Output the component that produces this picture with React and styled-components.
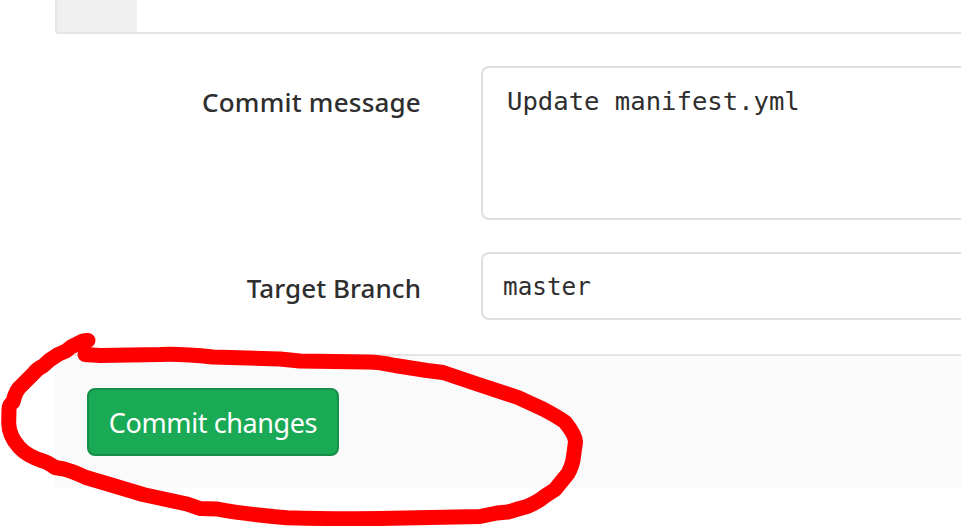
import React from "react";
import styled, { createGlobalStyle } from "styled-components";

const GlobalStyle = createGlobalStyle`
  html, body { margin: 0; background: #fff; overflow: hidden; }
  *, *::before, *::after { box-sizing: border-box; }
`;

const Page = styled.main`
  position: relative;
  height: 526px;
  padding-left: 55px;
  overflow: hidden;
  color: #2e2e2e;
  font-family: "Segoe UI", "Noto Sans", sans-serif;
`;

const Editor = styled.section`
  height: 34px;
  border: solid #e5e5e5;
  border-width: 0 0 2px 2px;
  border-bottom-left-radius: 4px;
  overflow: hidden;
`;

const Gutter = styled.div`
  width: 80px;
  height: 100%;
  background: #efefef;
`;

const FormRow = styled.div`
  display: grid;
  grid-template-columns: 366px 1fr;
  column-gap: 60px;
  margin: 32px -20px 0 0;
`;

const Label = styled.label`
  padding-top: 16px;
  font-size: 26px;
  font-weight: 500;
  line-height: 40px;
  letter-spacing: ${(p) => p.$tracking}px;
  text-align: right;
  white-space: nowrap;
`;

const fieldStyle = `
  display: block;
  width: 100%;
  margin: 0;
  border: 2px solid #dfdfdf;
  border-radius: 8px;
  outline: none;
  resize: none;
  background: #fff;
  color: #2e2e2e;
  font-family: Consolas, "DejaVu Sans Mono", monospace;
`;

const MessageField = styled.textarea`
  ${fieldStyle}
  height: 154px;
  padding: 13px 24px;
  font-size: 25.6px;
  line-height: 40px;
`;

const BranchField = styled.input`
  ${fieldStyle}
  height: 68px;
  padding: 0 20px;
  font-size: 24.3px;
`;

const Actions = styled.footer`
  height: 134px;
  margin-top: 34px;
  padding: 32px;
  border-top: 2px solid #e5e5e5;
  background: #fafafa;
`;

const CommitButton = styled.button`
  display: flex;
  align-items: center;
  justify-content: center;
  width: 252px;
  height: 68px;
  padding: 0;
  border: 2px solid #168f48;
  border-radius: 8px;
  background: #1aaa55;
  color: #fff;
  font-family: inherit;
  font-size: 27px;
  letter-spacing: -0.4px;
  white-space: nowrap;
`;

const Annotation = styled.svg`
  position: absolute;
  inset: 0;
  pointer-events: none;
`;

const stroke =
  "M88 340.500 Q82 340.500 79 343 L71 347 L66 351 L58 354.500 Q50 359 43 366 Q38 368 33 374 L19 388 Q15 393 13 402 Q9 405 9 409 L8.700 423 Q9 436 19 447 Q27 456 43 461 Q47 462 55 467.500 L64 469 Q72 471 86 477.500 L108 484 L143 494.500 L187 504 L200 508.500 L217 509 Q246 514.500 287 517.700 Q330 519 380 518.500 L480 516.500 L497 513 L508 512 L518 509 L527 506.500 Q538 502 545 496 L555 489.500 L568 473.500 Q572 466 573 460 L575.500 442 Q575.500 435 565 422 Q558 417 543 409 L518 397.500 L477 384 L443 372.500 L427 370.500 L395 365.500 Q378 361.800 367 362 L300 361 L280 359 L213 357 Q180 353.500 160 354.500 L100 355.500 L85 354.500";

export default function App() {
  return (
    <Page>
      <GlobalStyle />
      <Editor>
        <Gutter />
      </Editor>
      <FormRow>
        <Label htmlFor="message" $tracking={0.2}>Commit message</Label>
        <MessageField id="message" defaultValue="Update manifest.yml" spellCheck={false} />
      </FormRow>
      <FormRow>
        <Label htmlFor="branch" $tracking={0.05}>Target Branch</Label>
        <BranchField id="branch" defaultValue="master" spellCheck={false} />
      </FormRow>
      <Actions>
        <CommitButton>Commit changes</CommitButton>
      </Actions>
      <Annotation width="961" height="526" viewBox="0 0 961 526" aria-hidden="true">
        <path d={stroke} fill="none" stroke="#f00" strokeWidth="15" strokeLinecap="round" strokeLinejoin="round" />
      </Annotation>
    </Page>
  );
}
